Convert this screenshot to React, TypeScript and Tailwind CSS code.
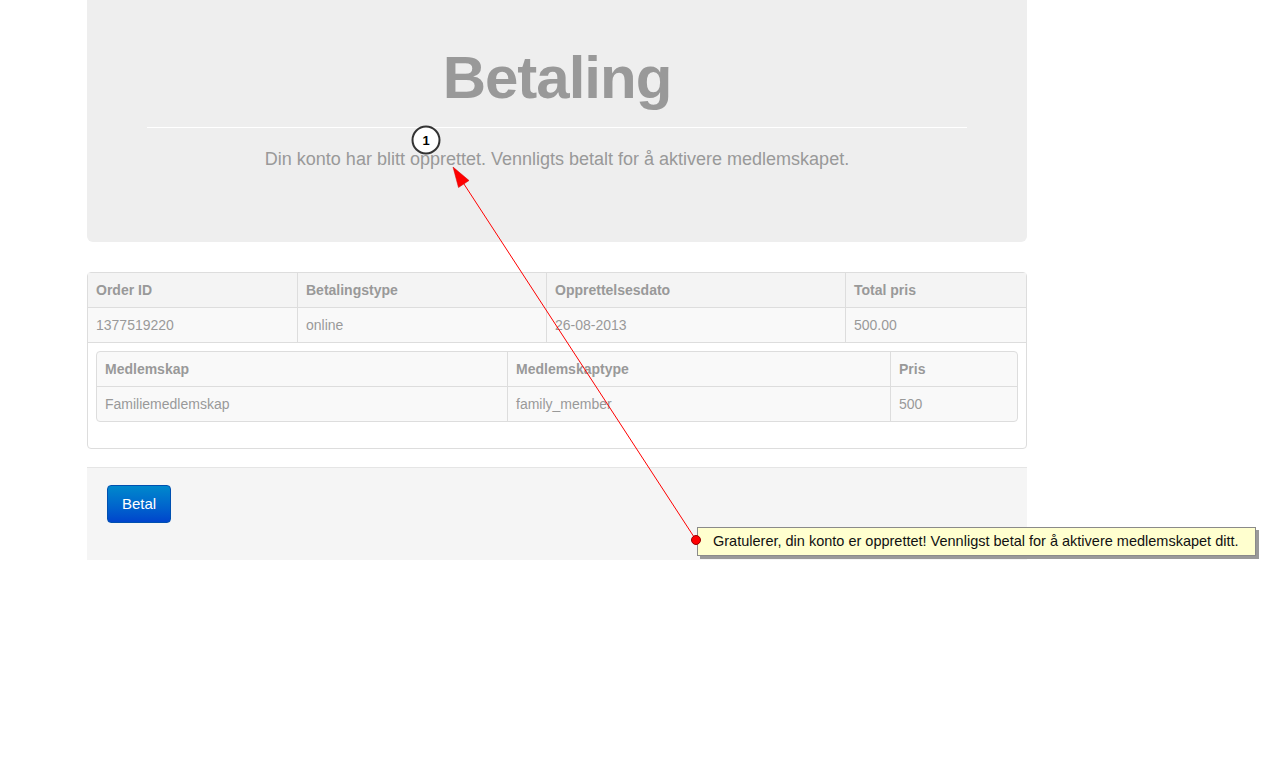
import * as React from 'react';

const orders = [{ id: '1377519220', type: 'online', date: '26-08-2013', total: '500.00' }];
const memberships = [{ name: 'Familiemedlemskap', type: 'family_member', price: '500' }];

const Annotation: React.FunctionComponent = () => (
  <>
    <div className="absolute left-[697px] top-[527px] h-[29px] w-[559px] border border-[#8a8a8a] bg-[#ffffcf] pl-[15px] text-[14.5px] leading-[27px] text-[#111] shadow-[3px_3px_0_#9a9a9a]">
      Gratulerer, din konto er opprettet! Vennligst betal for å aktivere medlemskapet ditt.
    </div>
    <svg className="absolute left-0 top-0 pointer-events-none" width={1267} height={774} viewBox="0 0 1267 774">
      <line x1={696} y1={540} x2={462} y2={181} stroke="#ff0000" strokeWidth={1} />
      <polygon points="453,167 469,180.5 458.5,187.5" fill="#ff0000" stroke="#cc0000" strokeWidth={0.5} />
      <circle cx={696} cy={540} r={4.5} fill="#ff0000" stroke="#990000" strokeWidth={1} />
      <circle cx={426} cy={140} r={13.5} fill="#ffffff" stroke="#333333" strokeWidth={2} />
      <text x={426} y={145} textAnchor="middle" fontSize={13} fontWeight="bold" fill="#000" fontFamily="'Liberation Sans', Arial, sans-serif">
        1
      </text>
    </svg>
  </>
);

export default function App() {
  return (
    <div className="relative h-[774px] w-[1267px] overflow-hidden bg-white font-['Liberation_Sans',Arial,sans-serif] text-[14px] leading-[20px] text-[#999]">
      <div className="ml-[87px] w-[940px]">
        <div className="rounded-b-[6px] bg-[#eeeeee] px-[60px] pb-[68px] pt-[48px] text-center">
          <h1 className="text-[60px] font-bold leading-[60px] tracking-[-1px] text-[#999]">Betaling</h1>
          <hr className="mt-[19px] border-0 border-t border-white" />
          <p className="mt-[16px] text-[18px] leading-[30px] text-[#999]">
            Din konto har blitt opprettet. Vennligts betalt for å aktivere medlemskapet.
          </p>
        </div>

        <div className="mt-[30px] rounded-[4px] border border-[#dddddd]">
          <div className="grid grid-cols-[209px_249px_299px_1fr] bg-[#f4f4f4] font-bold">
            <div className="px-[8px] py-[7px]">Order ID</div>
            <div className="border-l border-[#dddddd] px-[8px] py-[7px]">Betalingstype</div>
            <div className="border-l border-[#dddddd] px-[8px] py-[7px]">Opprettelsesdato</div>
            <div className="border-l border-[#dddddd] px-[8px] py-[7px]">Total pris</div>
          </div>
          {orders.map((o) => (
            <div key={o.id} className="grid grid-cols-[209px_249px_299px_1fr] border-t border-[#dddddd] bg-[#f9f9f9]">
              <div className="px-[8px] py-[7px]">{o.id}</div>
              <div className="border-l border-[#dddddd] px-[8px] py-[7px]">{o.type}</div>
              <div className="border-l border-[#dddddd] px-[8px] py-[7px]">{o.date}</div>
              <div className="border-l border-[#dddddd] px-[8px] py-[7px]">{o.total}</div>
            </div>
          ))}
          <div className="border-t border-[#dddddd] px-[8px] pb-[26px] pt-[8px]">
            <div className="rounded-[4px] border border-[#dddddd] bg-[#f9f9f9]">
              <div className="grid grid-cols-[410px_383px_1fr] font-bold">
                <div className="px-[8px] py-[7px]">Medlemskap</div>
                <div className="border-l border-[#dddddd] px-[8px] py-[7px]">Medlemskaptype</div>
                <div className="border-l border-[#dddddd] px-[8px] py-[7px]">Pris</div>
              </div>
              {memberships.map((m) => (
                <div key={m.type} className="grid grid-cols-[410px_383px_1fr] border-t border-[#dddddd]">
                  <div className="px-[8px] py-[7px]">{m.name}</div>
                  <div className="border-l border-[#dddddd] px-[8px] py-[7px]">{m.type}</div>
                  <div className="border-l border-[#dddddd] px-[8px] py-[7px]">{m.price}</div>
                </div>
              ))}
            </div>
          </div>
        </div>

        <div className="mt-[18px] h-[93px] border-t border-[#e5e5e5] bg-[#f5f5f5] px-[20px] pt-[17px]">
          <button className="h-[38px] rounded-[4px] border border-[#0050b0] bg-gradient-to-b from-[#0088cc] to-[#0044cc] px-[14px] text-[15px] text-white">
            Betal
          </button>
        </div>
      </div>
      <Annotation />
    </div>
  );
}
